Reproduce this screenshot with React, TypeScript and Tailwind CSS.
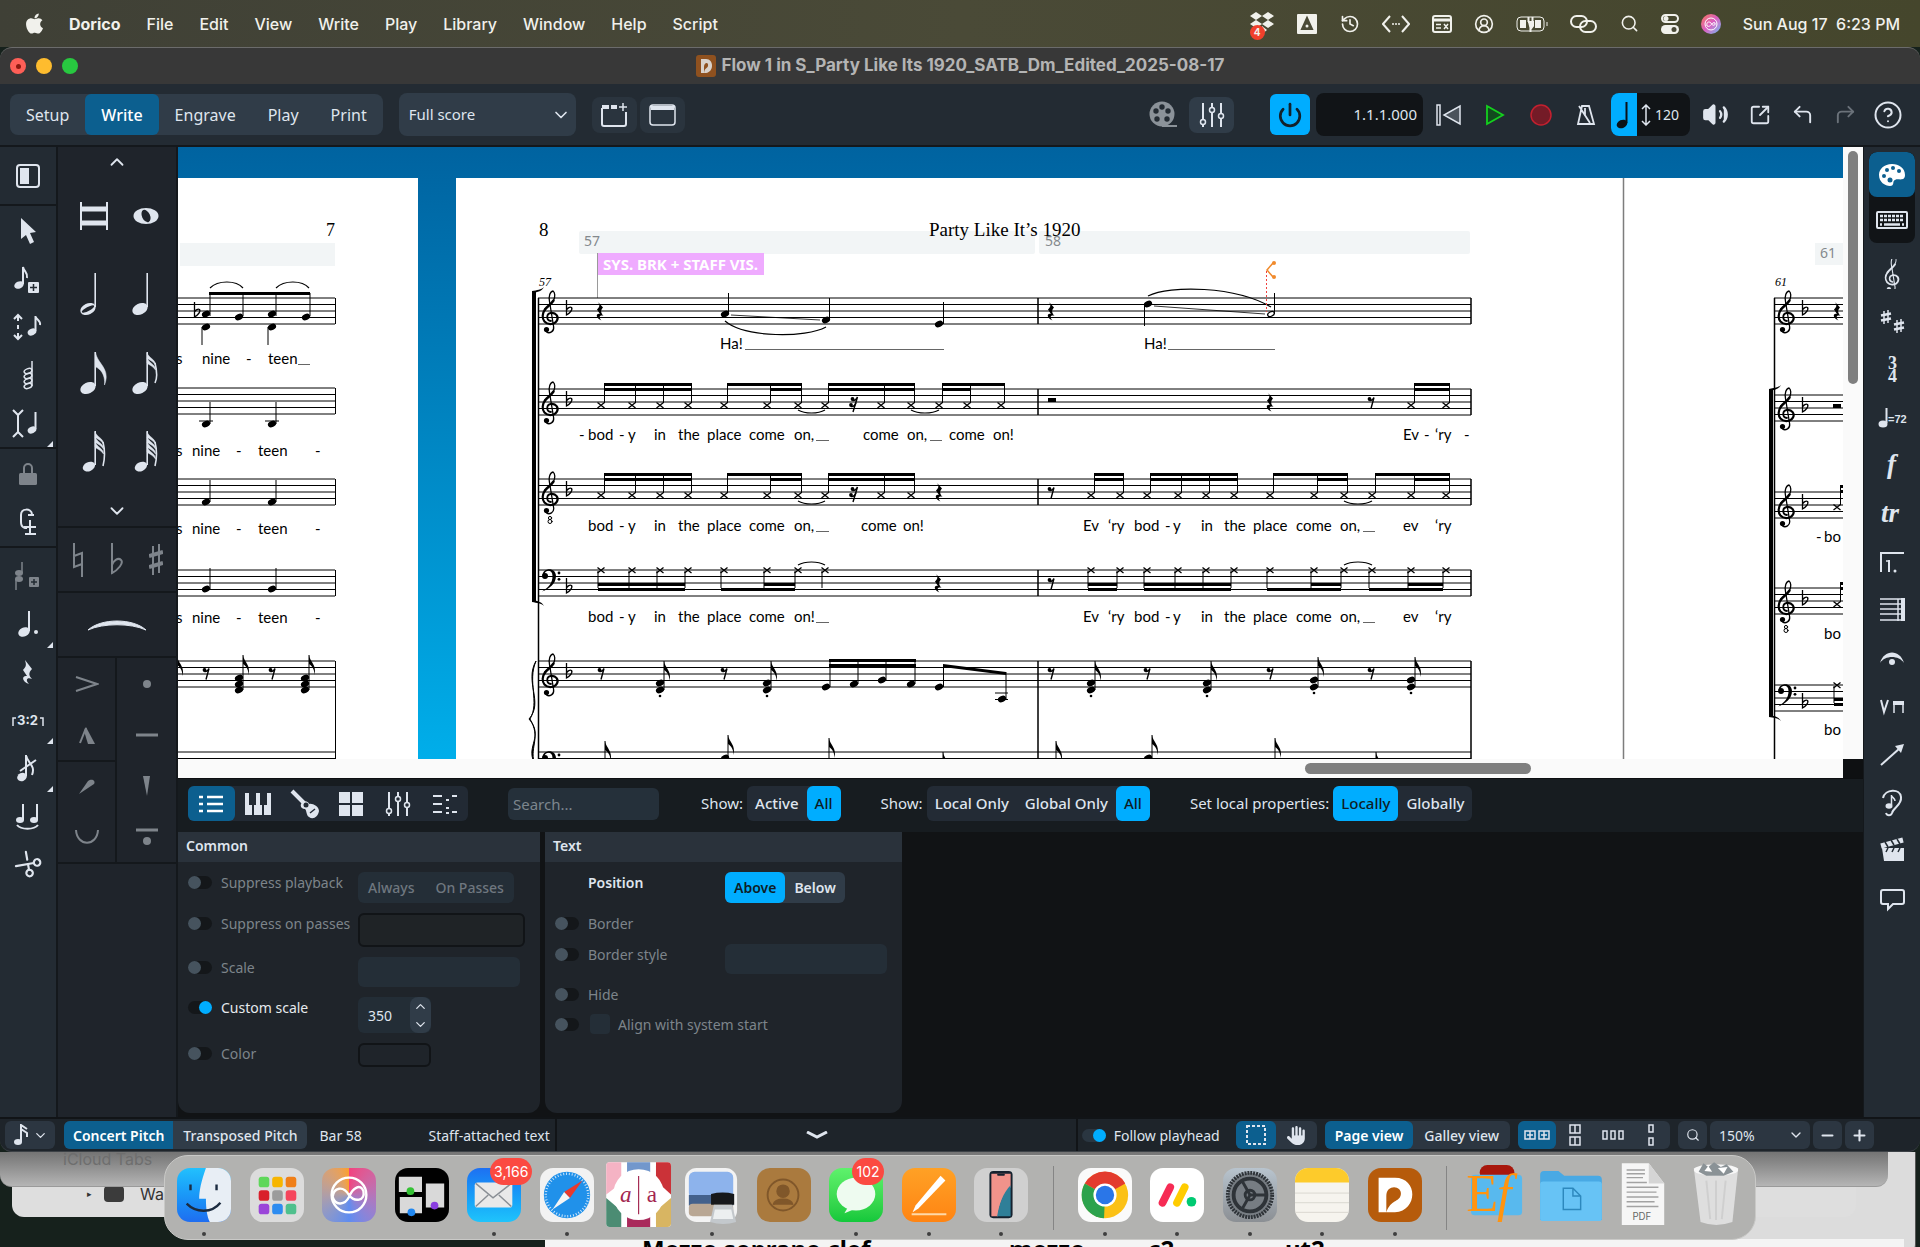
/**
 * Notation editor window on a desktop: menu bar, write-mode toolbars,
 * engraved score, properties panel, status bar and dock.
 */
import React, { useState } from 'react'
import { Search, Palette, Volume2, CircleHelp, SquareArrowOutUpRight, CornerUpLeft, CornerUpRight, Power, Minus, Plus, ChevronDown, ChevronUp, Scissors, CircleUserRound, History } from 'lucide-react'
import { FaApple, FaHand } from 'react-icons/fa6'

type Kids = { children?: React.ReactNode }

function Svg({ w, h, children, label }: Kids & { w: number, h: number, label?: string }) {
  return (
    <svg width={w} height={h} viewBox={`0 0 ${w} ${h}`} fill="none" stroke="currentColor" strokeWidth="2" className="shrink-0" aria-label={label}>
      {children}
    </svg>
  )
}

/* ---------- music glyphs, all drawn around their own origin ---------- */

function Treble({ x, y, eight }: { x: number, y: number, eight?: boolean }) {
  return (
    <g transform={`translate(${x} ${y})`} fill="none" stroke="currentColor" strokeLinecap="round">
      <path d="M1 3.5C-4 3-4-4 1-4.5" strokeWidth="1.8" />
      <path d="M1-4.5C6-5 9-1 7 3C5 7-2 8-5.500 4C-8 1-8-4-5-8" strokeWidth="2.2" />
      <path d="M-5-8C-3-11 1-13 3.500-17" strokeWidth="2.400" />
      <path d="M3.500-17C5.500-21 5-25 3-26.500C0-26-1.500-21-.5-16L3.600 9C4.500 14-.5 16.500-3.500 14.500" strokeWidth="1.300" />
      <circle cx="-3.500" cy="12" r="2.600" fill="currentColor" stroke="none" />
      {eight && <><circle cx="0" cy="19.500" r="1.600" strokeWidth="1" /><circle cx="0" cy="23" r="2" strokeWidth="1" /></>}
    </g>
  )
}

function Bass({ x, y }: { x: number, y: number }) {
  return (
    <g transform={`translate(${x} ${y})`} fill="currentColor">
      <circle cx="-5" cy="0" r="3" />
      <path d="M-7.500-1C-7-8 5.500-9.500 6 0C6 8-1 13-8 15.500C-1 11 2.500 7 2.500 0C2.500-7-5-6.500-6-1Z" />
      <circle cx="9" cy="-3" r="1.400" />
      <circle cx="9" cy="3.300" r="1.400" />
    </g>
  )
}

function Flat({ x, y }: { x: number, y: number }) {
  return <path transform={`translate(${x} ${y})`} d="M-2.500-11V4C1 2 4-1.500 2.500-3.500C1-4.500-1.500-3-2.500-1" fill="none" stroke="currentColor" strokeWidth="1.300" />
}

function QuarterRest({ x, y }: { x: number, y: number }) {
  return <path transform={`translate(${x} ${y})`} d="M-2.500-9.500L3-3.500C.5-.5.5 1.500 3.500 5C0 3.500-2 6 1.500 9.500C-4.500 7-4.500 2 0 3L-3-1.500C0-4 0-6.500-2.500-9.500Z" fill="currentColor" />
}

function EighthRest({ x, y, two }: { x: number, y: number, two?: boolean }) {
  return (
    <g transform={`translate(${x} ${y})`} fill="none" stroke="currentColor" strokeWidth="1.400">
      <circle cx="-1.500" cy="-3" r="1.900" fill="currentColor" stroke="none" />
      <path d={two ? 'M-1.500-1.500C1-1 2.500-3 3.500-5L-1 10' : 'M-1.500-1.500C1-1 2-2.500 3-4.500L0 6.500'} />
      {two && <><circle cx="-3" cy="3" r="1.900" fill="currentColor" stroke="none" /><path d="M-3 4.500C-.5 5 1 3.500 2 1" /></>}
    </g>
  )
}

function Head({ x, y, hollow }: { x: number, y: number, hollow?: boolean }) {
  return <ellipse cx={x} cy={y} rx={hollow ? 3.500 : 4.300} ry={hollow ? 2.200 : 3} transform={`rotate(-25 ${x} ${y})`} fill={hollow ? 'none' : 'currentColor'} stroke="currentColor" strokeWidth={hollow ? 1.300 : 0} />
}

function Stem({ x, y1, y2 }: { x: number, y1: number, y2: number }) {
  return <path d={`M${x} ${y1}V${y2}`} stroke="currentColor" strokeWidth="1" />
}

function FlagUp({ x, y }: { x: number, y: number }) {
  return <path transform={`translate(${x} ${y})`} d="M0 0C1 7 8 10 5.500 20C5.500 14 3 11 0 9Z" fill="currentColor" />
}

/* notes that share a stem, with the eighth-note flag on top */
function Chord({ x, ys, top, dot }: { x: number, ys: number[], top: number, dot?: boolean }) {
  return (
    <g>
      {ys.map((y) => <Head key={y} x={x} y={y} />)}
      <Stem x={x + 4} y1={top} y2={ys[ys.length - 1]} />
      <FlagUp x={x + 4} y={top} />
      {dot && <circle cx={x} cy={ys[ys.length - 1] + 6} r="1.300" />}
    </g>
  )
}

function Staff({ x1, x2, y }: { x1: number, x2: number, y: number }) {
  return <path d={[0, 6.5, 13, 19.5, 26].map((d) => `M${x1} ${y + d}H${x2}`).join('')} stroke="currentColor" strokeWidth="1" />
}

type Group = { heads: number[], second?: [number, number] }

/* spoken rhythm: cross heads under (or over) one or two beams */
function Rap({ groups, y, up }: { groups: Group[], y: number, up: boolean }) {
  const off = up ? 3.5 : -3
  const beam = up ? y - 22 : y + 18
  const inner = up ? y - 17 : y + 13
  return (
    <g>
      {groups.map((g) => {
        const a = g.heads[0]
        const b = g.heads[g.heads.length - 1]
        const [s, t] = g.second ?? [a, b]
        return (
          <g key={a}>
            {g.heads.map((x) => (
              <g key={x}>
                <path d={`M${x - 3.5} ${y - 2.5}l7 5.500m0-5.500l-7 5.500`} stroke="currentColor" strokeWidth="1.300" />
                <Stem x={x + off} y1={up ? y - 2 : y + 1} y2={beam} />
              </g>
            ))}
            {b > a && <>
              <rect x={a + off} y={beam} width={b - a} height="3" />
              <rect x={s + off} y={inner} width={t - s} height="3" />
            </>}
          </g>
        )
      })}
    </g>
  )
}

const BAR_57: Group[] = [
  { heads: [601, 632, 660, 688] },
  { heads: [724, 767, 798], second: [767, 798] },
  { heads: [825, 881, 911] },
]
const BAR_58: Group[] = [
  { heads: [1091, 1120] },
  { heads: [1147, 1178, 1206, 1234] },
  { heads: [1270, 1314, 1344], second: [1314, 1344] },
  { heads: [1372, 1411, 1446], second: [1411, 1446] },
]

type Word = [number, string]
const LINE_A: Word[] = [[588, 'bod'], [619, '-'], [628, 'y'], [654, 'in'], [678, 'the'], [707, 'place'], [749, 'come']]
const LINE_B: Word[] = [[1083, 'Ev'], [1108, '‘ry'], [1134, 'bod'], [1165, '-'], [1173, 'y'], [1201, 'in'], [1224, 'the'], [1253, 'place'], [1296, 'come'], [1340, 'on,'], [1403, 'ev'], [1435, '‘ry']]

function Lyrics({ y, words, lines = [] }: { y: number, words: Word[], lines?: [number, number][] }) {
  return (
    <g>
      {words.map(([x, w]) => <text key={x} x={x} y={y} className="font-['Lato',sans-serif] text-[15px]">{w}</text>)}
      {lines.map(([a, b]) => <path key={a} d={`M${a} ${y + 0.5}H${b}`} stroke="#666" strokeWidth="1" />)}
    </g>
  )
}

function Arc({ d }: { d: string }) {
  return <path d={d} fill="none" stroke="currentColor" strokeWidth="1.200" />
}

function Bracket({ x, y1, y2 }: { x: number, y1: number, y2: number }) {
  return (
    <g>
      <rect x={x} y={y1} width="4" height={y2 - y1} />
      <path d={`M${x} ${y1 + 2}C${x + 6} ${y1 + 1} ${x + 10} ${y1} ${x + 12} ${y1 - 4}C${x + 9} ${y1 - 1} ${x + 5} ${y1 - 1} ${x} ${y1}Z`} />
      <path d={`M${x} ${y2 - 2}C${x + 6} ${y2 - 1} ${x + 10} ${y2} ${x + 12} ${y2 + 4}C${x + 9} ${y2 + 1} ${x + 5} ${y2 + 1} ${x} ${y2}Z`} />
    </g>
  )
}

const LABEL = "font-['Noto_Sans',sans-serif] text-[14px]"

function LeftPage() {
  return (
    <g>
      <rect x="178" y="178" width="240" height="581" fill="#fff" />
      <rect x="180" y="243" width="155" height="23" fill="#f2f5f6" />
      <text x="326" y="236" className="font-['Liberation_Serif',serif] text-[18px]">7</text>
      {[298, 388, 479, 570, 661, 752].map((y) => <Staff key={y} x1={178} x2={335} y={y} />)}
      {[298, 388, 479, 570].map((y) => <path key={y} d={`M335.500 ${y}V${y + 26}`} stroke="currentColor" />)}
      <path d="M335.500 661V760" stroke="currentColor" />
      <Flat x={197} y={313} />
      {[206, 239, 272, 306].map((x, i) => <g key={x}><Head x={x} y={i % 2 ? 317 : 314} /><Stem x={x + 4} y1={293} y2={316} /></g>)}
      <rect x="209" y="292" width="101" height="3" />
      {[206, 272].map((x) => (
        <g key={x}>
          <Arc d={`M${x + 4} 288C${x + 12} 280 ${x + 30} 280 ${x + 37} 288`} />
          <Head x={x} y={327} /><Stem x={x - 4} y1={327} y2={345} />
          <Head x={x} y={424} /><Stem x={x + 4} y1={402} y2={424} /><path d={`M${x - 7} 421h14`} stroke="currentColor" />
          <Head x={x} y={502} /><Stem x={x + 4} y1={480} y2={502} />
          <Head x={x} y={589} /><Stem x={x + 4} y1={568} y2={589} />
          <EighthRest x={x} y={673} />
          <Chord x={x + 33} ys={[678, 684, 690]} top={655} />
        </g>
      ))}
      <FlagUp x={177} y={656} />
      <Lyrics y={364} words={[[176, 's'], [202, 'nine'], [246, '-'], [268, 'teen']]} lines={[[298, 310]]} />
      {[456, 534, 623].map((y) => <Lyrics key={y} y={y} words={[[176, 's'], [192, 'nine'], [236, '-'], [258, 'teen'], [315, '-']]} />)}
    </g>
  )
}

function MiddlePage() {
  return (
    <g>
      <rect x="456" y="178" width="1168" height="581" fill="#fff" />
      <rect x="579" y="231" width="456" height="23" rx="2" fill="#f2f5f6" />
      <rect x="1039" y="231" width="431" height="23" rx="2" fill="#f2f5f6" />
      <text x="584" y="246" fill="#84898d" className={LABEL}>57</text>
      <text x="1045" y="246" fill="#84898d" className={LABEL}>58</text>
      <path d="M597.500 253V298" stroke="#9a9a9a" />
      <rect x="598" y="253" width="166" height="22" fill="#efabff" />
      <text x="603" y="270" fill="#fff" className="font-['Noto_Sans',sans-serif] text-[15px] font-bold">SYS. BRK + STAFF VIS.</text>
      <text x="539" y="236" className="font-['Liberation_Serif',serif] text-[19px]">8</text>
      <text x="929" y="236" className="font-['Liberation_Serif',serif] text-[19px]">Party Like It’s 1920</text>
      <text x="539" y="286" className="font-['Liberation_Serif',serif] text-[12px] italic">57</text>

      {[298, 389, 479, 570, 661, 752].map((y) => <Staff key={y} x1={538} x2={1471} y={y} />)}
      {[298, 389, 479, 570].map((y) => <path key={y} d={`M1038 ${y}V${y + 26}M1471 ${y}V${y + 26}`} stroke="currentColor" strokeWidth="1.500" />)}
      <path d="M538.500 298V760M1038 661V760M1471 661V760" stroke="currentColor" strokeWidth="1.500" />
      <Bracket x={532} y1={291} y2={602} />
      <path d="M536 661C524 682 544 702 529 719C544 736 526 746 534 762C530 746 541 738 530 719C540 702 527 682 536 661Z" stroke="currentColor" />

      {[298, 389, 479, 661].map((y) => <Treble key={y} x={550} y={y + 19.5} eight={y === 479} />)}
      {[298, 389, 479, 661].map((y) => <Flat key={y} x={569} y={y + 13} />)}
      <Bass x={550} y={576} /><Flat x={569} y={589} />
      <Bass x={550} y={758} />

      <QuarterRest x={600} y={311} />
      <Head x={725} y={314} /><Stem x={728.5} y1={293} y2={314} />
      <Head x={826} y={320} /><Stem x={829.5} y1={298} y2={320} />
      <Head x={939} y={324} /><Stem x={943.5} y1={302} y2={324} />
      <path d="M731 315L820 320" stroke="currentColor" strokeWidth=".8" />
      <Arc d="M725 321C745 338 806 338 826 327" />
      <Lyrics y={349} words={[[720, 'Ha!'], [1144, 'Ha!']]} lines={[[745, 944], [1168, 1275]]} />
      <QuarterRest x={1051} y={311} />
      <Head x={1148} y={304} /><Stem x={1144.5} y1={304} y2={326} />
      <Head x={1271} y={314} hollow /><Stem x={1274.5} y1={293} y2={314} />
      <path d="M1154 306L1265 314" stroke="currentColor" strokeWidth=".8" />
      <Arc d="M1148 296C1170 285 1235 286 1271 307" />
      <path d="M1266.500 271V312" stroke="#f0413e" strokeDasharray="2 2" />
      <path d="M1273 263L1267 270L1273 277" fill="none" stroke="#f08a2c" strokeWidth="1.500" />
      <circle cx="1274" cy="263" r="2" fill="#f08a2c" /><circle cx="1274" cy="277" r="2" fill="#f08a2c" />

      <Rap y={405} up groups={[...BAR_57, { heads: [939, 967, 1001], second: [939, 967] }, { heads: [1411, 1446] }]} />
      <EighthRest x={854} y={402} two />
      <Arc d="M798 410C805 414 818 414 825 410M911 410C918 414 932 414 939 410" />
      <rect x="1048" y="398" width="8" height="4" />
      <QuarterRest x={1270} y={402} /><EighthRest x={1371} y={402} />
      <Lyrics y={440} words={[[579, '-'], ...LINE_A, [794, 'on,'], [863, 'come'], [907, 'on,'], [949, 'come'], [993, 'on!'], [1403, 'Ev'], [1424, '-'], [1435, '‘ry'], [1464, '-']]} lines={[[816, 829], [930, 942]]} />

      <Rap y={495} up groups={[...BAR_57, ...BAR_58]} />
      <EighthRest x={854} y={492} two /><QuarterRest x={939} y={492} /><EighthRest x={1051} y={492} />
      <Arc d="M798 501C805 505 818 505 825 501M1344 501C1351 505 1365 505 1372 501" />
      <Lyrics y={531} words={[...LINE_A, [794, 'on,'], [861, 'come'], [903, 'on!'], ...LINE_B]} lines={[[816, 829], [1363, 1375]]} />

      <Rap y={570} up={false} groups={[BAR_57[0], BAR_57[1], { heads: [825] }, ...BAR_58]} />
      <QuarterRest x={938} y={583} /><EighthRest x={1051} y={583} />
      <Arc d="M798 565C805 561 818 561 825 565M1344 565C1351 561 1365 561 1372 565" />
      <Lyrics y={622} words={[...LINE_A, [794, 'on!'], ...LINE_B]} lines={[[816, 829], [1363, 1375]]} />

      {[601, 724, 1051, 1147, 1270, 1371].map((x) => <EighthRest key={x} x={x} y={673} />)}
      {[660, 767, 1091, 1207].map((x) => <Chord key={x} x={x} ys={[683, 690]} top={661} dot />)}
      {[1314, 1411].map((x) => <Chord key={x} x={x} ys={[680, 687]} top={657} dot />)}
      {[[826, 687], [854, 684], [882, 680], [911, 684]].map(([x, y]) => <g key={x}><Head x={x} y={y} /><Stem x={x + 4} y1={660} y2={y} /></g>)}
      <rect x="829" y="659" width="87" height="3" /><rect x="829" y="664" width="87" height="3" />
      <Head x={939} y={687} /><Stem x={943.5} y1={665} y2={687} />
      <Head x={1002} y={699} /><Stem x={1006} y1={672} y2={699} />
      <path d="M943 664L1006 672V675L943 667Z" />
      <path d="M995 693h13M995 699.500h13" stroke="currentColor" />
      {[[605, 741], [728, 735], [829, 738], [943, 752], [1056, 741], [1152, 735], [1275, 738], [1376, 752]].map(([x, y]) => <g key={x}><Stem x={x} y1={y} y2={760} /><FlagUp x={x} y={y} /></g>)}
      <Head x={725} y={758} /><Head x={1148} y={758} />
    </g>
  )
}

function RightPage() {
  return (
    <g>
      <rect x="1624" y="178" width="600" height="581" fill="#fff" />
      <path d="M1623.500 178V759" stroke="#7d7d7d" strokeWidth="1.500" />
      <rect x="1815" y="243" width="40" height="22" fill="#f2f5f6" />
      <text x="1820" y="258" fill="#84898d" className={LABEL}>61</text>
      <text x="1775" y="286" className="font-['Liberation_Serif',serif] text-[12px] italic">61</text>
      {[298, 395, 492, 588, 685].map((y) => <Staff key={y} x1={1774} x2={1860} y={y} />)}
      <path d="M1774.500 298V760" stroke="currentColor" strokeWidth="1.500" />
      <Bracket x={1769} y1={389} y2={717} />
      {[298, 395, 492, 588].map((y) => <g key={y}><Treble x={1786} y={y + 19.5} eight={y === 588} /><Flat x={1805} y={y + 13} /></g>)}
      <Bass x={1786} y={691} /><Flat x={1805} y={704} />
      <QuarterRest x={1837} y={311} />
      <rect x="1833" y="404" width="8" height="4" />
      <Rap y={507} up groups={[{ heads: [1837, 1868] }]} />
      <Rap y={604} up groups={[{ heads: [1837, 1868] }]} />
      <Rap y={685} up={false} groups={[{ heads: [1837, 1868] }]} />
      <Lyrics y={542} words={[[1816, '-'], [1824, 'bo']]} />
      <Lyrics y={639} words={[[1824, 'bo']]} />
      <Lyrics y={735} words={[[1824, 'bo']]} />
    </g>
  )
}

function ScoreView() {
  return (
    <div className="flex min-h-0 flex-1 bg-[#0e1012]">
      <div className="flex min-w-0 flex-1 flex-col">
        <div className="min-h-0 flex-1 overflow-hidden bg-linear-to-b from-[#0063a0] to-[#00aeea]">
          <svg width="2044" height="612" viewBox="178 147 2044 612" fill="currentColor" className="max-w-none text-black">
            <LeftPage />
            <MiddlePage />
            <RightPage />
          </svg>
        </div>
        <div className="flex h-[19px] items-center bg-[#fafafa]">
          <div className="mr-[312px] ml-auto h-[11px] w-[226px] rounded-full bg-[#7f7f7f]" />
        </div>
      </div>
      <div className="mb-[19px] flex w-[20px] flex-col items-center bg-[#fafafa] pt-1">
        <div className="h-[233px] w-[10px] rounded-full bg-[#7f7f7f]" />
      </div>
    </div>
  )
}

/* ---------- toolbar icons ---------- */

/* duration buttons: flags counts the tails on the stem */
function NoteIcon({ flags = 0, hollow }: { flags?: number, hollow?: boolean }) {
  const small = flags > 2
  return (
    <svg width="30" height="46" viewBox="0 0 30 46" fill="currentColor" stroke="currentColor" aria-hidden="true">
      <ellipse cx={small ? 10 : 9} cy="37" rx={small ? 6.5 : 8} ry={small ? 4.5 : 5.500} transform="rotate(-25 9 37)" strokeWidth="0" />
      {hollow && <ellipse cx="9" cy="37" rx="7" ry="2" transform="rotate(-28 9 37)" fill="#1f242b" strokeWidth="0" />}
      <path d="M16.200 1V35" strokeWidth="1.600" />
      {flags === 1 && <path d="M16.500 1C18 13 32 17 25.500 34C26.500 23 21 18 17 16Z" strokeWidth=".5" />}
      {flags > 1 && Array.from({ length: flags }, (_, i) => (
        <path key={i} d={`M16 ${2 + i * 5}C18 ${7 + i * 5} 25 ${9 + i * 5} 24.500 ${14 + i * 5}C22 ${10 + i * 5} 18 ${9 + i * 5} 16 ${7 + i * 5}Z`} strokeWidth=".5" />
      ))}
      {flags > 1 && <path d={`M24 ${12}C26 20 26 28 24 ${flags === 2 ? 32 : 36}`} fill="none" strokeWidth="1.600" />}
    </svg>
  )
}

const TOOLS: [string, React.ReactNode, boolean?, boolean?][] = [
  ['Select', <path d="M9 2L9 23L14 19L18 28L22 26L18 17L24 16Z" fill="currentColor" stroke="none" />],
  ['Start note input', <><ellipse cx="7" cy="21" rx="5" ry="3.500" transform="rotate(-25 7 21)" fill="currentColor" stroke="none" /><path d="M11 20V3C12 8 16 8 15 14" /><rect x="16" y="18" width="11" height="11" rx="1" fill="currentColor" stroke="none" /><path d="M21.500 20v7M18 23.500h7" stroke="#232b33" strokeWidth="1.500" /></>],
  ['Pitch before duration', <><path d="M6 9V3M2 7l4-4l4 4M6 21v6M2 23l4 4l4-4M6 13v4" /><ellipse cx="20" cy="20" rx="4.500" ry="3.300" transform="rotate(-25 20 20)" fill="currentColor" stroke="none" /><path d="M23.500 19V4C24 8 29 8 28 13" /></>],
  ['Chords', <><path d="M20 1V26" strokeWidth="1.500" />{[12, 17, 22, 27].map((y) => <ellipse key={y} cx="16" cy={y - 1} rx="4" ry="2.300" transform={`rotate(-20 16 ${y - 1})`} strokeWidth="1.500" />)}</>],
  ['Insert mode', <><path d="M1 2l5 5l5-5M6 7v17M1 29l5-5l5 5" /><ellipse cx="20" cy="22" rx="4.500" ry="3.300" transform="rotate(-25 20 22)" fill="currentColor" stroke="none" /><path d="M23.500 21V4" /></>, false, true],
  ['Lock durations', <><rect x="7" y="14" width="18" height="12" rx="1.500" fill="currentColor" stroke="none" /><path d="M12 14V9a4 4 0 0 1 8 0v5" /></>, true],
  ['Force duration', <><path d="M20 7C19 1 9 1 9 8v7c0 7 6 6 6 6M16 8h6M18 13v14M12 20h12M13 27h11" /></>],
  ['Add note', <><ellipse cx="7" cy="12" rx="4" ry="3" fill="currentColor" stroke="none" /><path d="M10 12V1M4 18V29" strokeWidth="1.500" /><ellipse cx="7" cy="18" rx="4" ry="3" fill="currentColor" stroke="none" /><rect x="17" y="16" width="10" height="10" rx="1" fill="currentColor" stroke="none" /><path d="M22 18v6M19 21h6" stroke="#232b33" strokeWidth="1.500" /></>, true],
  ['Rhythm dots', <><ellipse cx="12" cy="23" rx="6" ry="4.500" transform="rotate(-25 12 23)" fill="currentColor" stroke="none" /><path d="M17 22V2" /><circle cx="24" cy="23" r="2" fill="currentColor" stroke="none" /></>, false, true],
  ['Rests', <path d="M13 3L20 12C16 16 17 19 20 22C15 20 13 23 17 27C9 24 10 18 15 19L11 13C15 9 14 7 13 3Z" fill="currentColor" stroke="none" />],
  ['Tuplets', <><path d="M1 21V13h3M28 13h3v8" strokeWidth="1.500" /><text x="5" y="20" fill="currentColor" stroke="none" className="font-['Inter',sans-serif] text-[13px] font-bold">3:2</text></>, false, true],
  ['Grace notes', <><ellipse cx="10" cy="24" rx="5" ry="4" transform="rotate(-25 10 24)" fill="currentColor" stroke="none" /><path d="M14 23V2C15 10 24 12 20 22M8 18L24 7" /></>, false, true],
  ['Ties', <><ellipse cx="8" cy="19" rx="4" ry="3" fill="currentColor" stroke="none" /><ellipse cx="22" cy="19" rx="4" ry="3" fill="currentColor" stroke="none" /><path d="M11 19V3M25 19V3M5 24C9 29 22 29 26 24" /></>],
]

const NOTE_CELLS: [string, React.ReactNode][] = [
  ['Breve', <Svg w={30} h={28}><path d="M2 0V28M28 0V28" /><path d="M3 7H27M3 21H27" strokeWidth="5" /></Svg>],
  ['Whole note', <Svg w={26} h={18}><ellipse cx="13" cy="9" rx="12.500" ry="8" fill="currentColor" stroke="none" /><ellipse cx="13" cy="9" rx="4" ry="6.500" transform="rotate(-25 13 9)" fill="#1f242b" stroke="none" /></Svg>],
  ['Half note', <NoteIcon hollow />],
  ['Quarter note', <NoteIcon />],
  ['Eighth note', <NoteIcon flags={1} />],
  ['Sixteenth note', <NoteIcon flags={2} />],
  ['32nd note', <NoteIcon flags={3} />],
  ['64th note', <NoteIcon flags={4} />],
]

function ToolBox() {
  const cell = (from: number, to: number) => TOOLS.slice(from, to).map(([name, art, dim, more]) => (
    <button key={name} aria-label={name} className={`relative flex h-12 w-full items-center justify-center ${dim ? 'text-[#7e848b]' : 'text-[#dfe5ee]'}`}>
      <Svg w={32} h={30}>{art}</Svg>
      {more && <span className="absolute right-[3px] bottom-0 size-0 border-b-[6px] border-l-[6px] border-b-[#dfe5ee] border-l-transparent" />}
    </button>
  ))
  return (
    <div className="flex w-[58px] shrink-0 flex-col border-r-2 border-[#14181c] bg-[#232b33]">
      <button aria-label="Show notes panel" className="flex h-[57px] items-center justify-center text-[#dfe5ee]">
        <Svg w={24} h={24}><rect x="1" y="1" width="22" height="22" rx="3" /><rect x="4" y="4" width="9" height="16" fill="currentColor" stroke="none" /></Svg>
      </button>
      <div className="border-t-2 border-[#14181c] pt-px">{cell(0, 5)}</div>
      <div className="border-t-2 border-[#14181c] pt-px">{cell(5, 7)}</div>
      <div className="border-t-2 border-[#14181c] pt-1">
        {cell(7, 13)}
        <button aria-label="Cut" className="flex h-12 w-full items-center justify-center text-[#dfe5ee]"><Scissors size={26} className="rotate-[215deg]" /></button>
      </div>
    </div>
  )
}

function NotesPanel() {
  const line = 'border-[#14181c]'
  return (
    <div className="flex w-[120px] shrink-0 flex-col border-r-2 border-[#14181c] bg-[#1f242b] text-[#dfe5ee]">
      <button aria-label="Shorter durations" className="flex h-[29px] items-center justify-center"><ChevronUp size={22} /></button>
      <div className="grid grid-cols-2 pr-1 pl-[10px]">
        {NOTE_CELLS.map(([name, art]) => <button key={name} aria-label={name} className="flex h-[79px] items-center justify-center">{art}</button>)}
      </div>
      <button aria-label="Longer durations" className="flex h-[34px] items-end justify-center pb-1"><ChevronDown size={22} /></button>
      <div className={`grid h-[65px] grid-cols-3 border-t-2 text-[#7e848b] ${line}`}>
        <button aria-label="Natural" className="flex items-center justify-center"><Svg w={14} h={34}><path d="M3 0V24L11 21M11 34V10L3 13" /></Svg></button>
        <button aria-label="Flat" className="flex items-center justify-center"><Svg w={14} h={34}><path d="M2 0V30C8 27 14 20 11 17C8 14 3 18 2 22" /></Svg></button>
        <button aria-label="Sharp" className="flex items-center justify-center"><Svg w={14} h={34}><path d="M4 3V32M10 1V30" /><path d="M0 13L14 9M0 24L14 20" strokeWidth="4" /></Svg></button>
      </div>
      <button aria-label="Slur" className={`flex h-[65px] items-center justify-center border-t-2 ${line}`}>
        <Svg w={60} h={14}><path d="M1 12C14 0 46 0 59 12C44 5 16 5 1 12Z" fill="currentColor" strokeWidth="1" /></Svg>
      </button>
      <div className={`grid grid-cols-2 border-y-2 text-[#7e848b] ${line}`}>
        <div className={`border-r-2 ${line}`}>
          <button aria-label="Accent" className="flex h-[52px] w-full items-center justify-center"><Svg w={24} h={18}><path d="M1 2L22 9L1 16" /></Svg></button>
          <button aria-label="Marcato" className="flex h-[50px] w-full items-center justify-center"><Svg w={18} h={18}><path d="M2 17L8 2" /><path d="M8 1L17 18H10L6 5Z" fill="currentColor" stroke="none" /></Svg></button>
          <button aria-label="Stress" className={`flex h-[52px] w-full items-center justify-center border-t-2 ${line}`}><Svg w={18} h={18}><path d="M1 16L10 3C14 0 18 3 16 6Z" fill="currentColor" stroke="none" /></Svg></button>
          <button aria-label="Unstress" className="flex h-[50px] w-full items-center justify-center"><Svg w={26} h={15}><path d="M2 0C3 17 23 17 24 0" /></Svg></button>
        </div>
        <div>
          <button aria-label="Staccato" className="flex h-[52px] w-full items-center justify-center"><Svg w={10} h={10}><circle cx="5" cy="5" r="4" fill="currentColor" stroke="none" /></Svg></button>
          <button aria-label="Tenuto" className="flex h-[50px] w-full items-center justify-center"><Svg w={22} h={4}><path d="M0 2H22" strokeWidth="3" /></Svg></button>
          <button aria-label="Staccatissimo" className="flex h-[52px] w-full items-center justify-center"><Svg w={10} h={20}><path d="M1 0H8L5 20Z" fill="currentColor" stroke="none" /></Svg></button>
          <button aria-label="Tenuto staccato" className="flex h-[50px] w-full items-center justify-center"><Svg w={22} h={18}><path d="M0 2H22" strokeWidth="3" /><circle cx="11" cy="13" r="4" fill="currentColor" stroke="none" /></Svg></button>
        </div>
      </div>
    </div>
  )
}

const PALETTES: [string, React.ReactNode][] = [
  ['Clefs', <g transform="translate(2 3) scale(.85)"><Treble x={14} y={20} /></g>],
  ['Key signatures', <><path d="M6 4V17M10 3V16M19 13V26M23 12V25" strokeWidth="1.500" /><path d="M3 8.500l10-2M3 13.500l10-2M16 17.500l10-2M16 22.500l10-2" strokeWidth="2.500" /></>],
  ['Time signatures', <g fill="currentColor" stroke="none" className="font-['Liberation_Serif',serif] text-[18px] font-bold"><text x="10" y="14">3</text><text x="10" y="27">4</text></g>],
  ['Tempo', <><ellipse cx="5" cy="21" rx="4.500" ry="3.500" fill="currentColor" stroke="none" /><path d="M8.500 20V5" /><text x="10" y="20" fill="currentColor" stroke="none" className="font-['Liberation_Sans',sans-serif] text-[11px] font-bold">=72</text></>],
  ['Dynamics', <text x="9" y="22" fill="currentColor" stroke="none" className="font-['Liberation_Serif',serif] text-[27px] font-bold italic">f</text>],
  ['Ornaments', <text x="3" y="23" fill="currentColor" stroke="none" className="font-['Liberation_Serif',serif] text-[27px] font-bold italic">tr</text>],
  ['Repeat structures', <><path d="M3 25V6H26M11 13v12" /><path d="M8 14h3" strokeWidth="1.500" /><circle cx="17" cy="24" r="1.500" fill="currentColor" stroke="none" /></>],
  ['Bars and barlines', <><path d="M2 4H27M2 9H27M2 14H27M2 19H27M2 25H27" strokeWidth="1.500" /><path d="M20 4V26" strokeWidth="1.500" /><path d="M25 3V26" strokeWidth="4" /></>],
  ['Holds and pauses', <><path d="M2 20C6 6 22 6 26 20C21 12 7 12 2 20Z" fill="currentColor" stroke="none" /><circle cx="14" cy="19" r="3" fill="currentColor" stroke="none" /></>],
  ['Playing techniques', <><path d="M3 9L6 21L10 9" /><path d="M16 22V12H25V22" strokeWidth="1.500" /><path d="M15 12H26" strokeWidth="4" /></>],
  ['Lines', <><path d="M3 26L22 9" /><path d="M17 7L26 5L23 14Z" fill="currentColor" stroke="none" /></>],
  ['Playback', <><path d="M5 11C7 2 22 1 23 10C24 18 15 21 14 26C13 29 9 29 8 26" /><ellipse cx="11" cy="19" rx="3.500" ry="2.700" fill="currentColor" stroke="none" /><path d="M13.500 18V8C14 11 17 11 17 14" strokeWidth="1.500" /></>],
  ['Video', <><path d="M4 13H26V26H6Z" fill="currentColor" stroke="none" /><path d="M3 11L25 5" strokeWidth="5" /><path d="M7 7l3 5M13 5l3 5M19 4l3 5M10 13l-2 4M16 13l-2 4M22 13l-2 4" stroke="#232b33" strokeWidth="1.500" /></>],
  ['Comments', <path d="M5 7H24Q26 7 26 9V19Q26 21 24 21H15L10 26V21H5Q3 21 3 19V9Q3 7 5 7Z" />],
]

function RightBar() {
  return (
    <div className="flex w-[57px] shrink-0 flex-col items-center border-l border-[#14181c] bg-[#232b33] pt-[5px] text-[#dfe5ee]">
      <div className="w-[46px] overflow-hidden rounded-lg bg-[#111417]">
        <button aria-label="Panels" className="flex h-[45px] w-full items-center justify-center rounded-lg bg-[#0c5f8f] text-white">
          <Svg w={28} h={26}>
            <path d="M14 2C6 2 1 7 1 13C1 20 7 24 12 24C17 24 14 19 17 18C20 16 27 20 27 13C27 6 21 2 14 2Z" fill="currentColor" stroke="none" />
            {[[6, 14], [9, 8], [15, 6], [21, 9]].map(([x, y]) => <circle key={x} cx={x} cy={y} r="2" fill="#0c5f8f" stroke="none" />)}
            <circle cx="12" cy="18" r="2.500" fill="#0c5f8f" stroke="none" />
          </Svg>
        </button>
        <button aria-label="Keyboard" className="flex h-[46px] w-full items-center justify-center">
          <Svg w={32} h={18}><rect x="1" y="1" width="30" height="16" rx="1" /><path d="M4 5H28M4 9H28" strokeDasharray="3 1" strokeWidth="2.500" /><path d="M4 13.500H6M8 13.500H24M26 13.500H28" strokeWidth="2.500" /></Svg>
        </button>
      </div>
      <div className="pt-[7px]">
        {PALETTES.map(([name, art]) => <button key={name} aria-label={name} className="flex h-12 w-[46px] items-center justify-center"><Svg w={29} h={30}>{art}</Svg></button>)}
      </div>
    </div>
  )
}

/* ---------- menu bar, title bar, main toolbar ---------- */

function MenuBar() {
  return (
    <nav className="flex h-[47px] shrink-0 items-center bg-linear-to-r from-[#3f4036] via-[#4a4a37] to-[#45462c] px-5 font-['Inter',sans-serif] text-[16px] font-medium text-[#f1f1ec]">
      <FaApple size={23} className="ml-[3px]" />
      <div className="flex gap-[26px] pl-[23px]">
        <button className="font-bold">Dorico</button>
        {['File', 'Edit', 'View', 'Write', 'Play', 'Library', 'Window', 'Help', 'Script'].map((m) => <button key={m}>{m}</button>)}
      </div>
      <div className="ml-auto flex items-center gap-[22px]">
        <div className="relative">
          <Svg w={24} h={24}><path d="M6 0l6 4l-6 4l-6-4zM18 0l6 4l-6 4l-6-4zM6 8l6 4l-6 4l-6-4zM18 8l6 4l-6 4l-6-4zM12 14l5 4l-5 4z" fill="currentColor" stroke="none" /></Svg>
          <span className="absolute -bottom-1 left-0 flex size-[15px] items-center justify-center rounded-full bg-[#f0402c] text-[10px] font-bold">4</span>
        </div>
        <Svg w={22} h={22}><rect x="1" y="1" width="20" height="20" rx="1" fill="currentColor" stroke="none" /><path d="M11 5L16 16H6Z" fill="#4a4a37" stroke="#4a4a37" /><circle cx="11" cy="13" r="1.500" fill="currentColor" stroke="none" /></Svg>
        <History size={20} />
        <Svg w={28} h={20}><path d="M8 2L1 10L8 18M20 2L27 10L20 18" /><path d="M10 10H19" strokeDasharray="2 1" strokeWidth="1.500" /></Svg>
        <Svg w={20} h={20}><rect x="1" y="2" width="18" height="16" rx="2" /><path d="M1 6H19" strokeWidth="3" /><path d="M4 10.500h5M4 14h5M12 10l4 5M16 10l-4 5" strokeWidth="1.500" /></Svg>
        <CircleUserRound size={20} />
        <Svg w={32} h={18}><rect x="1" y="2" width="27" height="14" rx="4" strokeWidth="1" /><path d="M4 5H10V13H4ZM19 5H25V13H19Z" fill="currentColor" stroke="none" /><path d="M12.500 2V7M16.500 2V7M12 7H17V11L14.500 14V17" fill="currentColor" /><path d="M31 7V11" strokeWidth="1" /></Svg>
        <Svg w={28} h={20}><rect x="1" y="2" width="16" height="11" rx="5.500" /><rect x="10" y="7" width="16" height="11" rx="5.500" /></Svg>
        <Search size={19} />
        <Svg w={18} h={20}><rect x="1" y="1" width="16" height="7" rx="3.500" /><circle cx="5" cy="4.500" r="2.500" fill="currentColor" stroke="none" /><rect x="0" y="11" width="18" height="9" rx="4.500" fill="currentColor" stroke="none" /><circle cx="13" cy="15.500" r="2.500" fill="#4a4a37" stroke="none" /></Svg>
        <span className="flex size-5 items-center justify-center rounded-full bg-linear-to-br from-[#f9734f] via-[#d95ec2] to-[#3fb7f5]">
          <Svg w={16} h={16}><circle cx="8" cy="8" r="6" stroke="#fff" strokeWidth="1" /><path d="M4 10C8 12 9 5 12 7C13 10 9 10 8 7C6 5 3 6 4 10Z" stroke="#fff" strokeWidth="1" /></Svg>
        </span>
        <time className="whitespace-pre text-[16px]">Sun Aug 17  6:23 PM</time>
      </div>
    </nav>
  )
}

function TitleBar() {
  return (
    <header className="grid h-[37px] shrink-0 grid-cols-[1fr_auto_1fr] items-center rounded-t-xl border-t border-[#6b6b6b] bg-[#383838] px-[10px]">
      <div className="flex gap-[10px]">
        <button aria-label="Close" className="flex size-4 items-center justify-center rounded-full bg-[#fe5f57]"><span className="size-[5px] rounded-full bg-[#8c1a10]" /></button>
        <button aria-label="Minimize" className="size-4 rounded-full bg-[#febc2e]" />
        <button aria-label="Zoom" className="size-4 rounded-full bg-[#28c840]" />
      </div>
      <h1 className="flex items-center gap-[6px] font-['Inter',sans-serif] text-[17px] font-bold text-[#b4b4b4]">
        <Svg w={20} h={22}><rect width="20" height="22" rx="3" fill="#8f511f" stroke="none" /><path fillRule="evenodd" d="M5 4H10C18 4 18 17 10 18H5ZM8 18V12C8 7 13 7 12 11C11 14 9 12 8 18Z" fill="#d9d2cb" stroke="none" /></Svg>
        Flow 1 in S_Party Like Its 1920_SATB_Dm_Edited_2025-08-17
      </h1>
    </header>
  )
}

function MainToolbar() {
  const [mode, setMode] = useState('Write')
  return (
    <div className="flex h-[63px] shrink-0 items-center border-b-2 border-b-[#14181c] bg-[#232b33] pr-[17px] pl-[10px] text-[16px] text-[#dfe5ee]">
      <div className="flex h-[41px] rounded-lg bg-[#303c48]">
        {['Setup', 'Write', 'Engrave', 'Play', 'Print'].map((m) => (
          <button key={m} onClick={() => setMode(m)} aria-pressed={m === mode} className={`px-4 ${m === mode ? 'rounded-md bg-[#0c5f8f] font-medium text-white' : ''}`}>{m}</button>
        ))}
      </div>
      <label className="relative ml-4 flex h-[43px] w-[177px] items-center rounded-lg bg-[#303c48]">
        <select aria-label="Layout" className="h-full w-full appearance-none bg-transparent px-[10px] text-[15px]"><option>Full score</option></select>
        <ChevronDown size={20} className="pointer-events-none absolute right-[5px]" />
      </label>
      <button aria-label="New tab" className="ml-4 flex h-9 w-[45px] items-center justify-center rounded-lg bg-[#2a343e]">
        <Svg w={28} h={26}><path d="M2 6V22Q2 24 4 24H24Q26 24 26 22V10" /><path d="M2 5H9M11 5H17" strokeWidth="4" /><path d="M23 1V9M19 5H27" strokeWidth="1.500" /></Svg>
      </button>
      <button aria-label="New window" className="ml-[3px] flex h-9 w-[45px] items-center justify-center rounded-lg bg-[#2a343e]">
        <Svg w={27} h={22}><rect x="1" y="1" width="25" height="20" rx="3" strokeWidth="1.500" /><path d="M2 4H25" strokeWidth="4" /></Svg>
      </button>

      <div className="ml-auto flex items-center">
        <button aria-label="Video" className="mr-3 text-[#8b9299]">
          <Svg w={28} h={28}><circle cx="13" cy="13" r="12.500" fill="currentColor" stroke="none" /><path d="M13 25H28" />{[[13, 6], [19, 10], [18, 18], [8, 18], [7, 10]].map(([x, y]) => <circle key={y + x} cx={x} cy={y} r="2.700" fill="#232b33" stroke="none" />)}</Svg>
        </button>
        <button aria-label="Mixer" className="flex h-9 w-[45px] items-center justify-center rounded-lg bg-[#303c48]"><Faders /></button>
        <button aria-label="Activate project" className="ml-9 flex h-[41px] w-10 items-center justify-center rounded-md bg-[#00adff] text-[#12212c]"><Power size={26} strokeWidth={2.5} /></button>
        <output className="ml-[6px] flex h-[43px] w-[107px] items-center justify-end rounded-lg bg-[#111417] pr-[6px] text-[15px]">1.1.1.000</output>
        <button aria-label="Rewind" className="ml-[14px] flex w-6 justify-center"><Svg w={26} h={22}><rect x="1" y="1" width="3" height="20" strokeWidth="1.500" /><path d="M24 2V20L8 11Z" fill="#4a525b" strokeWidth="1.500" /></Svg></button>
        <button aria-label="Play" className="ml-6 text-[#14d11e]"><Svg w={20} h={22}><path d="M2 2V20L18 11Z" fill="#124a1e" strokeWidth="1.800" /></Svg></button>
        <button aria-label="Record" className="ml-[25px] text-[#c4202f]"><Svg w={22} h={22}><circle cx="11" cy="11" r="10" fill="#741b27" strokeWidth="1.500" /></Svg></button>
        <button aria-label="Click" className="ml-6"><Svg w={20} h={22}><path d="M6 2H13L18 20H2ZM3 2L14 19M9 4V12" strokeWidth="1.800" /></Svg></button>
        <div className="ml-[15px] flex h-[43px] w-[79px] items-center overflow-hidden rounded-lg bg-[#111417] text-[14px]">
          <button aria-label="Fixed tempo" className="flex h-full w-[26px] items-center justify-center bg-[#00adff] text-[#0a1117]"><Svg w={16} h={28}><ellipse cx="6" cy="23" rx="5.500" ry="4" transform="rotate(-25 6 23)" fill="currentColor" stroke="none" /><path d="M10.500 22V1" /></Svg></button>
          <Svg w={18} h={22}><path d="M9 2V20M5 5l4-4l4 4M5 17l4 4l4-4" strokeWidth="1.500" /></Svg>
          <span>120</span>
        </div>
        <button aria-label="Volume" className="ml-3"><Volume2 size={27} fill="currentColor" /></button>
        <button aria-label="Export" className="ml-5"><SquareArrowOutUpRight size={22} /></button>
        <button aria-label="Undo" className="ml-5"><CornerUpLeft size={23} /></button>
        <button aria-label="Redo" className="ml-5 text-[#6b727a]"><CornerUpRight size={23} /></button>
        <button aria-label="Help" className="ml-4"><CircleHelp size={30} strokeWidth={1.6} /></button>
      </div>
    </div>
  )
}

function Faders() {
  return (
    <Svg w={26} h={24}>
      <path d="M4 0V16M4 22V24M13 0V4M13 10V24M22 0V10M22 16V24" />
      <circle cx="4" cy="19" r="2.500" strokeWidth="1.500" /><circle cx="13" cy="7" r="2.500" strokeWidth="1.500" /><circle cx="22" cy="13" r="2.500" strokeWidth="1.500" />
    </Svg>
  )
}

/* ---------- lower zone ---------- */

const TABS: [string, React.ReactNode][] = [
  ['Properties', <Svg w={24} h={18}><path d="M8 2H24M8 9H24M8 16H24M0 2H4M0 9H4M0 16H4" strokeWidth="2.500" /></Svg>],
  ['Keyboard', <Svg w={26} h={22}><path d="M0 0H4V12H7V22H0ZM11 0H15V12H17V22H9V12H11ZM22 0H26V22H19V12H22Z" fill="currentColor" stroke="none" /></Svg>],
  ['Fretboard', <Svg w={32} h={30}><path d="M3 2L15 14" strokeWidth="4" /><path d="M12 15C15 10 20 13 20 15C23 14 30 17 30 22C29 28 24 31 20 28C17 26 18 22 16 20C13 20 11 18 12 15Z" fill="currentColor" stroke="none" /><circle cx="17" cy="16" r="2.500" fill="#222a34" stroke="none" /><path d="M21 24L26 20" stroke="#222a34" strokeWidth="1.500" /></Svg>],
  ['Drum pads', <Svg w={24} h={24}><path d="M0 0H11V11H0ZM13 0H24V11H13ZM0 13H11V24H0ZM13 13H24V24H13Z" fill="currentColor" stroke="none" /></Svg>],
  ['Mixer', <Faders />],
  ['Key editor', <Svg w={26} h={22}><path d="M1 3H10M1 11H10M1 19H10M14 7H17M14 15H17M20 3H25M20 19H25M14 20H17" /></Svg>],
]

function Segmented({ options, value }: { options: string[], value: string }) {
  return (
    <div className="flex h-[35px] rounded-md bg-[#232b35] font-medium">
      {options.map((o) => <button key={o} aria-pressed={o === value} className={`px-2 ${o === value ? 'rounded-md bg-[#00adff] text-[#0e1c26]' : ''}`}>{o}</button>)}
    </div>
  )
}

function Toggle({ id, on, label, field }: { id: string, on?: boolean, label: string, field?: React.ReactNode }) {
  return (
    <div className="flex items-start">
      <div className="flex h-[21px] w-[170px] items-center">
        <input id={id} type="checkbox" defaultChecked={on} className="h-[13px] w-6 appearance-none rounded-full bg-[#14171a] before:block before:size-[13px] before:rounded-full before:bg-[#46535e] checked:before:ml-[11px] checked:before:bg-[#00adff]" />
        <label htmlFor={id} className={`ml-[9px] whitespace-nowrap ${on ? 'text-[#e6eaee]' : 'text-[#7d848a]'}`}>{label}</label>
      </div>
      {field}
    </div>
  )
}

function Properties() {
  return (
    <section className="flex h-[339px] shrink-0 flex-col bg-[#111315] text-[14px] text-[#dfe5ee]">
      <div className="flex h-[54px] items-center border-t border-[#0d0f11] bg-[#171c20] pb-[4px] pl-[10px] text-[15px]">
        <div className="flex h-[35px] w-[280px] rounded-md bg-[#222a34]">
          {TABS.map(([name, art], i) => <button key={name} aria-label={name} className={`flex flex-1 items-center justify-center rounded-md ${i === 0 ? 'bg-[#0c5f8f] text-white' : ''}`}>{art}</button>)}
        </div>
        <input aria-label="Search properties" placeholder="Search..." className="ml-10 h-8 w-[151px] rounded-md bg-[#25303a] px-[5px] placeholder:text-[#7d868e]" />
        <span className="mr-1 ml-[42px]">Show:</span>
        <Segmented options={['Active', 'All']} value="All" />
        <span className="mr-1 ml-10">Show:</span>
        <Segmented options={['Local Only', 'Global Only', 'All']} value="All" />
        <span className="mr-1 ml-10">Set local properties:</span>
        <Segmented options={['Locally', 'Globally']} value="Locally" />
      </div>
      <div className="flex flex-1 gap-[5px] pb-1">
        <fieldset className="w-[362px] overflow-hidden rounded-b-xl bg-[#1f242a]">
          <div className="flex h-[30px] items-center bg-[#2a323b] px-2 pb-1 font-semibold">Common</div>
          <div className="flex flex-col gap-[10px] py-[10px] pl-[10px]">
            <Toggle id="suppress" label="Suppress playback" field={<div className="flex h-[31px] rounded-md bg-[#242e37] font-medium text-[#6f777f]"><button disabled className="pr-[11px] pl-[10px]">Always</button><button disabled className="px-[10px]">On Passes</button></div>} />
            <Toggle id="passes" label="Suppress on passes" field={<input aria-label="Passes" disabled className="h-[34px] w-[167px] rounded-md border-2 border-[#111417] bg-[#1f2326]" />} />
            <Toggle id="scale" label="Scale" field={<select aria-label="Scale value" disabled className="h-[30px] w-[162px] appearance-none rounded-md bg-[#242e37]" />} />
            <Toggle id="custom" on label="Custom scale" field={
              <div className="flex h-9 w-[73px] overflow-hidden rounded-md bg-[#232d36]">
                <input aria-label="Custom scale value" defaultValue="350" className="w-[52px] bg-transparent pl-[10px]" />
                <div className="flex w-[21px] flex-col items-center justify-around rounded-lg bg-[#303c48]">
                  <button aria-label="Increase"><ChevronUp size={15} /></button>
                  <button aria-label="Decrease"><ChevronDown size={15} /></button>
                </div>
              </div>
            } />
            <Toggle id="color" label="Color" field={<button aria-label="Pick color" className="h-6 w-[73px] rounded-md border-2 border-[#111417]" />} />
          </div>
        </fieldset>
        <fieldset className="w-[357px] overflow-hidden rounded-b-xl bg-[#1f242a]">
          <div className="flex h-[30px] items-center bg-[#2a323b] px-2 pb-1 font-semibold">Text</div>
          <div className="flex flex-col gap-[10px] py-[10px] pl-[10px]">
            <div className="flex items-start pl-[33px] font-semibold">
              <span className="h-[21px] w-[137px]">Position</span>
              <div className="flex h-[31px] rounded-md bg-[#303c48]"><button className="rounded-md bg-[#00adff] px-[9px] text-[#0e1c26]">Above</button><button className="px-[9px]">Below</button></div>
            </div>
            <Toggle id="border" label="Border" />
            <Toggle id="border-style" label="Border style" field={<select aria-label="Style" disabled className="h-[30px] w-[162px] appearance-none rounded-md bg-[#242e37]" />} />
            <Toggle id="hide" label="Hide" />
            <div className="flex h-[18px] items-center">
              <input type="checkbox" aria-label="Set alignment" className="h-[13px] w-6 appearance-none rounded-full bg-[#14171a] before:block before:size-[13px] before:rounded-full before:bg-[#46535e]" />
              <input id="align" type="checkbox" className="ml-[11px] size-5 appearance-none rounded bg-[#242e37]" />
              <label htmlFor="align" className="ml-2 text-[#7d848a]">Align with system start</label>
            </div>
          </div>
        </fieldset>
      </div>
    </section>
  )
}

function StatusBar() {
  return (
    <footer className="flex h-[35px] shrink-0 items-center rounded-b-xl border-t-2 border-b border-t-[#111417] border-b-[#3c4146] bg-[#1e242a] pr-[46px] pl-[5px] text-[14px] text-[#dfe5ee]">
      <button aria-label="Rhythmic grid" className="flex h-7 w-[50px] items-center justify-center gap-1 rounded-md bg-[#2c3641]">
        <Svg w={16} h={22}><ellipse cx="5" cy="18" rx="4" ry="3" fill="currentColor" stroke="none" /><path d="M8 18V1L14 5M8 5L14 9V13" /></Svg>
        <ChevronDown size={15} />
      </button>
      <div className="ml-[9px] flex h-7 rounded-md bg-[#303c48]">
        <button className="rounded-l-md bg-[#0c5f8f] px-[9px] font-semibold text-white">Concert Pitch</button>
        <button className="px-[10px] font-medium">Transposed Pitch</button>
      </div>
      <span className="ml-[12px] w-[109px]">Bar 58</span>
      <span className="w-[127px] whitespace-nowrap">Staff-attached text</span>
      <div className="flex h-full flex-1 items-center justify-center border-x-2 border-[#111417]"><button aria-label="Hide lower zone"><Svg w={22} h={8}><path d="M1 1L11 6L21 1" strokeWidth="3" /></Svg></button></div>
      <input id="follow" type="checkbox" defaultChecked className="ml-1 h-[13px] w-6 appearance-none rounded-full bg-[#2a3641] before:ml-[11px] before:block before:size-[13px] before:rounded-full before:bg-[#00adff]" />
      <label htmlFor="follow" className="ml-2">Follow playhead</label>
      <div className="ml-4 flex h-7 w-[81px] rounded-md bg-[#2c3641]">
        <button aria-label="Marquee tool" className="flex flex-1 items-center justify-center rounded-md bg-[#0c5f8f]"><Svg w={20} h={20}><rect x="1" y="1" width="18" height="18" strokeDasharray="3 2" /></Svg></button>
        <button aria-label="Hand tool" className="flex flex-1 items-center justify-center"><FaHand size={19} /></button>
      </div>
      <div className="ml-2 flex h-7 rounded-md bg-[#2c3641] font-medium">
        <button className="rounded-md bg-[#0c5f8f] px-[10px] font-semibold text-white">Page view</button>
        <button className="px-[11px]">Galley view</button>
      </div>
      <div className="ml-2 flex h-7 w-[152px] rounded-md bg-[#2c3641]">
        <button aria-label="Spreads horizontally" className="flex flex-1 items-center justify-center rounded-md bg-[#0c5f8f]"><Svg w={26} h={10}><path d="M1 1H11V9H1ZM6 1V9M15 1H25V9H15ZM20 1V9M3 5H9M17 5H23" strokeWidth="1.500" /></Svg></button>
        <button aria-label="Spreads vertically" className="flex flex-1 items-center justify-center"><Svg w={12} h={22}><path d="M1 1H11V9H1ZM6 1V9M1 13H11V21H1ZM6 13V21" strokeWidth="1.500" /></Svg></button>
        <button aria-label="Single pages horizontally" className="flex flex-1 items-center justify-center"><Svg w={22} h={10}><path d="M1 1H5V9H1ZM9 1H13V9H9ZM17 1H21V9H17Z" strokeWidth="1.500" /></Svg></button>
        <button aria-label="Single pages vertically" className="flex flex-1 items-center justify-center"><Svg w={6} h={22}><path d="M1 1H5V8H1ZM1 14H5V21H1Z" strokeWidth="1.500" /></Svg></button>
      </div>
      <button aria-label="Zoom options" className="ml-2 flex h-7 w-[29px] items-center justify-center rounded-md bg-[#2c3641]"><Search size={14} /></button>
      <label className="relative ml-[3px] flex h-7 w-[100px] items-center rounded-md bg-[#2c3641]">
        <select aria-label="Zoom level" className="h-full w-full appearance-none bg-transparent px-[9px]"><option>150%</option></select>
        <ChevronDown size={16} className="pointer-events-none absolute right-[6px]" />
      </label>
      <button aria-label="Zoom out" className="ml-[3px] flex h-7 w-[29px] items-center justify-center rounded-md bg-[#2c3641]"><Minus size={17} strokeWidth={3} /></button>
      <button aria-label="Zoom in" className="ml-[3px] flex h-7 w-[29px] items-center justify-center rounded-md bg-[#2c3641]"><Plus size={17} strokeWidth={3} /></button>
    </footer>
  )
}

/* ---------- dock ---------- */

const DOCK: { name: string, tile: string, run?: boolean, badge?: string, art?: React.ReactNode }[] = [
  { name: 'Finder', tile: 'bg-linear-to-b from-[#23c0fd] to-[#1f6df0]', run: true, art: <><path d="M30 0C25 14 23 24 23 32H30C30 42 31 50 34 56H56V0Z" fill="#e8eef5" /><path d="M14 17V23M41 17V23M10 37C20 47 36 47 45 36" fill="none" stroke="#1b2b40" strokeWidth="2.500" /></> },
  { name: 'Launchpad', tile: 'bg-[#dcdcdc]', art: <>{['#5fd75a', '#f7b500', '#f07f18', '#d9202b', '#9b9b9b', '#f5455c', '#9b45d9', '#2d8cf0', '#4fc08d'].map((c, i) => <rect key={c} x={9 + (i % 3) * 14} y={9 + Math.floor(i / 3) * 14} width="11" height="11" rx="3" fill={c} />)}</> },
  { name: 'Creative Cloud', tile: 'bg-conic from-[#f2417f] via-[#5f8cf0] to-[#f9a02c]', art: <g fill="none" stroke="#fff" strokeWidth="2.500"><circle cx="28" cy="28" r="18" /><path d="M11 30C14 40 24 38 28 30C32 20 40 16 43 24C45 34 34 36 28 28C22 18 12 20 11 30Z" /></g> },
  { name: 'Window layout', tile: 'bg-black', art: <><path d="M4 9H28V25H4ZM5 30H28V47H5ZM32 16H51V41H32Z" fill="#d9d9d9" /><circle cx="16" cy="24" r="4" fill="#35c235" /><circle cx="17" cy="46" r="4" fill="#2188f0" /><circle cx="41" cy="39" r="4" fill="#8a3fe0" /></> },
  { name: 'Mail', tile: 'bg-linear-to-b from-[#1e70f2] to-[#20c4fb]', run: true, badge: '3,166', art: <><rect x="8" y="15" width="39" height="26" rx="3" fill="#e9e9e9" /><path d="M9 16L27 31L46 16M9 40L22 28M46 40L33 28" fill="none" stroke="#8a8f95" strokeWidth="1.500" /></> },
  { name: 'Safari', tile: 'bg-[#f2f2f2]', run: true, art: <><circle cx="28" cy="28" r="24" fill="#2091ea" /><circle cx="28" cy="28" r="22" fill="none" stroke="#cfe6fa" strokeWidth="2.500" strokeDasharray="1 2" /><path d="M44 13L31 31L25 25Z" fill="#e8392e" /><path d="M13 43L31 31L25 25Z" fill="#f5f5f5" /></> },
  { name: 'Typography', tile: '', art: <g transform="translate(-6 -6) scale(1.200)"><rect width="56" height="56" rx="3" fill="#fff" /><path d="M0 3Q0 0 3 0H13V18L0 28Z" fill="#f5b3c4" /><path d="M18 0H38V12H18Z" fill="#7297cc" /><path d="M43 0H53Q56 0 56 3V28L43 16Z" fill="#cb3238" /><path d="M0 31L13 42V56H3Q0 56 0 53Z" fill="#4b8c73" /><path d="M18 46H38V56H18Z" fill="#a92a5b" /><path d="M56 31V53Q56 56 53 56H43V42Z" fill="#d8b562" /><circle cx="28" cy="28" r="22" fill="#fff" /><path d="M28 12V45" stroke="#a3264f" strokeWidth="1" /><g fill="#a3264f" className="font-['Liberation_Serif',serif] text-[20px]"><text x="12" y="34" fontStyle="italic">a</text><text x="35" y="34">a</text></g></g> },
  { name: 'Preview', tile: '', run: true, art: <><rect width="54" height="56" rx="12" fill="#f3f3f3" /><rect x="4" y="4" width="46" height="28" rx="6" fill="#8db3ec" /><rect x="4" y="28" width="46" height="11" fill="#43618c" /><rect x="4" y="37" width="46" height="13" rx="4" fill="#b9a794" /><path d="M27 27Q39 24 51 27V38H27Z" fill="#16181b" /><path d="M30 38H49L53 56Q40 60 26 56Z" fill="#c3c8cc" /><path d="M31 43H48L50 53H29Z" fill="#eceff0" /></> },
  { name: 'Contacts', tile: 'bg-[#aa7a3e]', art: <g fill="none" stroke="#80572a" strokeWidth="2"><circle cx="27" cy="28" r="16" /><circle cx="27" cy="24" r="6" fill="#80572a" /><path d="M17 38C19 31 35 31 37 38" fill="#80572a" /></g> },
  { name: 'Messages', tile: 'bg-linear-to-b from-[#5ef26c] to-[#12c83b]', run: true, badge: '102', art: <><ellipse cx="28" cy="27" rx="20" ry="17" fill="#eefbf0" /><path d="M20 40L16 47L28 42Z" fill="#eefbf0" /></> },
  { name: 'Pages', tile: 'bg-linear-to-b from-[#ffa125] to-[#ff8412]', run: true, art: <><path d="M40 8L45 13L17 42L11 46L14 39Z" fill="#fff" /><path d="M10 48H46" stroke="#ffd9a8" strokeWidth="2" /></> },
  { name: 'iPhone Mirroring', tile: 'bg-[#d0d0d0]', run: true, art: <><rect x="16" y="3" width="24" height="49" rx="4" fill="#16222f" /><path d="M18 6H38V20C30 28 26 38 25 50H18Z" fill="#f1938b" /><path d="M38 18V50H24C26 38 30 26 38 18Z" fill="#2f7f98" /><rect x="24" y="6" width="8" height="2" rx="1" fill="#16222f" /></> },
  { name: 'divider-1', tile: '' },
  { name: 'Chrome', tile: 'bg-[#fafafa]', run: true, art: <><circle cx="28" cy="28" r="24" fill="#fbc116" /><path d="M28 28L7 16A24 24 0 0 1 49 16Z" fill="#e33b2e" /><path d="M28 28L7 16A24 24 0 0 0 27 52Z" fill="#2ca24c" /><circle cx="28" cy="28" r="12" fill="#fff" /><circle cx="28" cy="28" r="9.500" fill="#2a76e8" /></> },
  { name: 'monday', tile: 'bg-white', run: true, art: <g strokeLinecap="round" strokeWidth="8"><path d="M13 36L21 20" stroke="#f62b54" /><path d="M28 36L36 20" stroke="#ffcc00" /><circle cx="43" cy="35" r="5" fill="#00ca72" /></g> },
  { name: 'System Settings', tile: 'bg-linear-to-b from-[#b8c4ce] to-[#8b8f94]', run: true, art: <g fill="none" stroke="#2e3338"><circle cx="28" cy="28" r="23" fill="#777d83" strokeWidth="4" strokeDasharray="2 1" /><circle cx="28" cy="28" r="17" strokeWidth="4" /><circle cx="28" cy="28" r="5" strokeWidth="3" /><path d="M28 28H46M28 28L19 12M28 28L19 44" strokeWidth="3" /></g> },
  { name: 'Notes', tile: 'bg-[#f6f4ee]', run: true, art: <><path d="M0 0H56V15H0Z" fill="#fdcb2b" /><path d="M0 26H56M0 36H56M0 46H56" stroke="#d8d6cf" /></> },
  { name: 'Dorico', tile: 'bg-[#b65b0b]', run: true, art: <path fillRule="evenodd" d="M11 10H28C52 10 52 44 28 46H11ZM19 46V29C19 16 36 18 34 28C32 36 24 32 19 46Z" fill="#fff" /> },
  { name: 'divider-2', tile: '' },
  { name: 'Finale', tile: '', art: <><rect x="9" y="-3" width="36" height="16" rx="8" fill="#a8170c" /><rect x="0" y="7" width="53" height="42" rx="4" fill="#58b9ee" /><g fill="#ff9410" className="font-['Liberation_Serif',serif] text-[54px]"><text x="-5" y="45">E</text><text x="27" y="45" fontStyle="italic">f</text></g></> },
  { name: 'Documents', tile: '', art: <><path d="M-4 7Q-4 3 0 3H15L21 8H56Q60 8 60 12V54H-4Z" fill="#49a9e4" /><rect x="-4" y="14" width="64" height="41" rx="3" fill="#67c3f5" /><path d="M20 21H30L38 29V43H20ZM30 21V29H38" fill="none" stroke="#2d88bd" strokeWidth="1.500" /></> },
  { name: 'PDF file', tile: '', art: <><path d="M6 -5H34L50 16V59H6Z" fill="#f6f6f6" /><path d="M34 -5V16H50Z" fill="#d5d5d5" /><path d="M11 2H30M11 6H30M11 10H28M11 15H32M11 20H44M11 25H42M11 30H44M11 35H40M11 40H44" stroke="#a2a2a2" strokeWidth="1.500" /><text x="17" y="54" fill="#666" className="font-['Inter',sans-serif] text-[10px]">PDF</text></> },
  { name: 'Trash', tile: '', art: <><path d="M5 0H51L45 56Q28 62 12 56Z" fill="#dedede" /><ellipse cx="28" cy="2" rx="23" ry="6" fill="#f7f7f7" /><path d="M10 4L15-5L20-1L26-6L33-1L39-4L46 4L36 8H18Z" fill="#8a9296" /><path d="M16 3L20-2L24 4ZM30 0L36 6L40-1Z" fill="#fff" /><path d="M18 13L22 53M28 13V54M38 13L34 53" stroke="#cfcfcf" strokeWidth="2" /></> },
]

function Dock() {
  return (
    <div className="absolute inset-x-[164px] bottom-[7px] flex h-[85px] rounded-[24px] border border-[#c9c9c7] bg-[#b2b2b0] px-[3px]">
      {DOCK.map((d) => d.name.startsWith('divider')
        ? <div key={d.name} className="flex w-[31px] items-center justify-center"><div className="h-[64px] w-px bg-[#858585]" /></div>
        : (
          <div key={d.name} className="relative flex flex-1 flex-col items-center pt-[12px]">
            <button aria-label={d.name} className={`size-[54px] rounded-[13px] ${d.tile ? 'overflow-hidden' : ''} ${d.tile}`}>
              <svg width="54" height="54" viewBox="0 0 56 56" className="overflow-visible">{d.art}</svg>
            </button>
            {d.badge && <span className="absolute top-[2px] left-1/2 -ml-1 flex h-[27px] min-w-[27px] items-center justify-center rounded-full bg-[#fb4a41] px-[4px] font-['Inter',sans-serif] text-[14px] text-white">{d.badge}</span>}
            {d.run && <span className="absolute bottom-[3px] size-[4px] rounded-full bg-[#3f3f3f]" />}
          </div>
        ))}
    </div>
  )
}

/* windows that stick out underneath, then the dock over them */
function Desktop() {
  return (
    <div className="relative h-[95px] shrink-0 overflow-hidden font-['Inter',sans-serif]">
      <div className="absolute -top-4 right-1 h-[120px] w-[400px] rounded-xl border-r border-[#555] bg-[#dcdcdc]" />
      <div className="absolute -top-4 right-16 left-3 h-[81px] rounded-b-xl bg-[#dedede]">
        <div className="flex items-center gap-3 pt-[46px] pl-[75px] text-[16px] text-[#333]"><span className="text-[9px]">▸</span><span className="h-4 w-5 rounded-sm bg-[#3b3b3b]" /><span className="pl-1">Wa</span></div>
      </div>
      <div className="absolute -top-6 right-8 left-0 h-[59px] rounded-b-xl border-b border-[#9a9a9a] bg-linear-to-b from-[#4a4a4a] to-[#b5b5b5] pt-[19px] pl-[63px] text-[16px] text-[#6e6e6e]">iCloud Tabs</div>
      <div className="absolute right-4 bottom-0 left-[545px] flex h-2 overflow-hidden bg-[#f4f4f4] pl-[97px] font-['Noto_Sans',sans-serif] text-[24px] leading-[20px] font-bold whitespace-nowrap text-black">
        <span className="w-[367px]">Mezzo soprano clef</span><span className="w-[139px]">mezzo</span><span className="w-[137px]">c2</span><span>ut2</span>
      </div>
      <Dock />
    </div>
  )
}

export default function App() {
  return (
    <main className="flex h-screen min-h-[900px] flex-col overflow-hidden bg-[#16211c] font-['Noto_Sans',sans-serif]">
      <MenuBar />
      <div className="flex min-h-0 flex-1 flex-col">
        <TitleBar />
        <MainToolbar />
        <div className="flex min-h-0 flex-1">
          <ToolBox />
          <NotesPanel />
          <div className="flex min-w-0 flex-1 flex-col">
            <ScoreView />
            <Properties />
          </div>
          <RightBar />
        </div>
        <StatusBar />
      </div>
      <Desktop />
    </main>
  )
}
